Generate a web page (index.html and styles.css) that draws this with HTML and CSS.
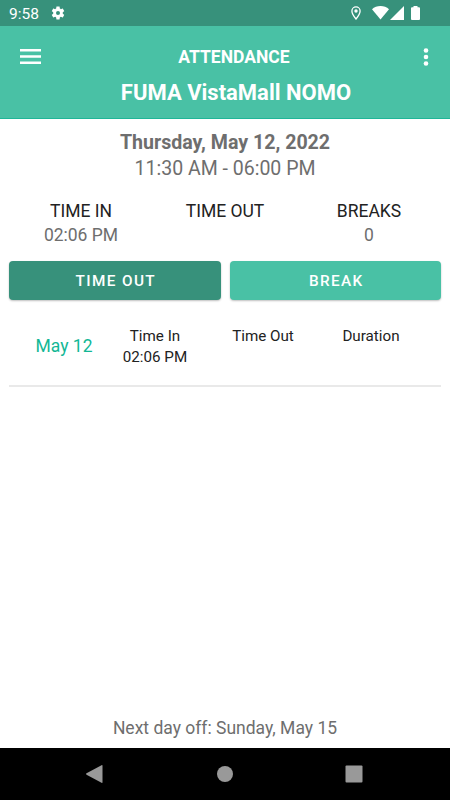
FILE: index.html
```html
<!DOCTYPE html>
<html lang="en">
<head>
    <meta charset="utf-8">
    <meta name="viewport" content="width=device-width, initial-scale=1.0">
    <title>Attendance</title>
    <link rel="stylesheet" href="styles.css">
</head>
<body>
    <div class="status-bar">
        <span class="clock">9:58</span>
        <svg class="gear" width="16" height="16" viewBox="0 0 24 24"><path fill="#fff" d="M19.14 12.94c.04-.3.06-.61.06-.94s-.02-.64-.07-.94l2.03-1.58c.18-.14.23-.41.12-.61l-1.92-3.32c-.12-.22-.37-.29-.59-.22l-2.39.96c-.5-.38-1.03-.7-1.62-.94l-.36-2.54c-.04-.24-.24-.41-.48-.41h-3.84c-.24 0-.43.17-.47.41l-.36 2.54c-.59.24-1.13.57-1.62.94l-2.39-.96c-.22-.08-.47 0-.59.22L2.74 8.87c-.12.21-.08.47.12.61l2.03 1.58c-.05.3-.09.63-.09.94s.02.64.07.94l-2.03 1.58c-.18.14-.23.41-.12.61l1.92 3.32c.12.22.37.29.59.22l2.39-.96c.5.38 1.03.7 1.62.94l.36 2.54c.05.24.24.41.48.41h3.84c.24 0 .44-.17.47-.41l.36-2.54c.59-.24 1.13-.56 1.62-.94l2.39.96c.22.08.47 0 .59-.22l1.92-3.32c.12-.22.07-.47-.12-.61l-2.01-1.58zM12 15a3 3 0 1 1 0-6 3 3 0 0 1 0 6z"/></svg>
        <div class="signals">
            <svg class="pin" width="10" height="14" viewBox="0 0 10 14"><path fill="none" stroke="#fff" stroke-width="1.3" d="M5 .9C2.7.9.9 2.700.9 5c0 3 4.100 8 4.100 8s4.100-5 4.100-8C9.100 2.700 7.300.9 5 .9z"/><circle cx="5" cy="5" r="1.700" fill="#fff"/></svg>
            <svg class="wifi" width="17" height="14" viewBox="0 0 17 14"><path fill="#fff" d="M0 3.200C2.300 1.200 5.200 0 8.500 0s6.200 1.200 8.500 3.200L8.500 13.500z"/></svg>
            <svg class="cell" width="14" height="14" viewBox="0 0 14 14"><path fill="#fff" d="M0 14L14 0v14z"/></svg>
            <svg class="battery" width="9" height="14" viewBox="0 0 9 14"><path fill="#fff" d="M2.500 0h4v1.300H8q1 0 1 1V13q0 1-1 1H1q-1 0-1-1V2.300q0-1 1-1h1.500z"/></svg>
        </div>
    </div>

    <header class="header">
        <div class="header-top">
            <svg class="menu" width="21" height="15" viewBox="0 0 21 15"><path fill="#fff" d="M0 0h21v2.500H0zM0 6.200h21v2.500H0zM0 12.400h21v2.500H0z"/></svg>
            <h1 class="title">ATTENDANCE</h1>
            <svg class="more" width="6" height="20" viewBox="0 0 6 20"><g fill="#fff"><circle cx="3" cy="3.500" r="2.300"/><circle cx="3" cy="10" r="2.300"/><circle cx="3" cy="16.500" r="2.300"/></g></svg>
        </div>
        <h2 class="branch">FUMA VistaMall NOMO</h2>
    </header>

    <main class="main">
        <div class="date">Thursday, May 12, 2022</div>
        <div class="shift">11:30 AM - 06:00 PM</div>

        <div class="summary">
            <div><div class="label">TIME IN</div><div class="value">02:06 PM</div></div>
            <div><div class="label">TIME OUT</div></div>
            <div><div class="label">BREAKS</div><div class="value">0</div></div>
        </div>

        <div class="actions">
            <button class="btn btn-dark">TIME OUT</button>
            <button class="btn">BREAK</button>
        </div>

        <div class="log">
            <div class="day">May 12</div>
            <div class="col">Time In<br>02:06 PM</div>
            <div class="col">Time Out</div>
            <div class="col">Duration</div>
        </div>
    </main>

    <div class="day-off">Next day off: Sunday, May 15</div>

    <nav class="nav-bar">
        <svg width="18" height="18" viewBox="0 0 18 18"><path fill="#999" d="M.5 8.300L15.500.2q1-.4 1 .6v16.400q0 1-1 .6L.5 9.700q-.8-.7 0-1.400z"/></svg>
        <svg width="18" height="18" viewBox="0 0 18 18"><circle cx="9" cy="9" r="8" fill="#999"/></svg>
        <svg width="18" height="18" viewBox="0 0 18 18"><rect x=".5" y=".5" width="17" height="17" rx="1" fill="#999"/></svg>
    </nav>
</body>
</html>
```

FILE: styles.css
```css
body {
    font-family: Roboto, sans-serif;
    margin: 0;
    height: 100vh;
    display: flex;
    flex-direction: column;
    background-color: #fff;
    color: #222;
}
svg {
    display: block;
    flex: none;
}
.status-bar {
    height: 26px;
    background-color: #37917b;
    color: #fff;
    display: flex;
    align-items: center;
    padding: 0 30px 0 9px;
}
.clock {
    width: 41px;
    font-size: 15.5px;
    line-height: 26px;
    padding-top: 2px;
}
.signals {
    margin-left: auto;
    display: flex;
    align-items: center;
}
.wifi {
    margin-left: 11px;
}
.cell {
    margin-left: 1px;
}
.battery {
    margin-left: 7px;
}
.header {
    box-sizing: border-box;
    height: 93px;
    background-color: #49c1a5;
    border-bottom: 1px solid #1fb698;
    color: #fff;
}
.header-top {
    display: flex;
    align-items: center;
    justify-content: space-between;
    height: 61px;
    padding: 0 21px 0 20px;
}
.title {
    margin: 0 0 0 4px;
    font-size: 17.5px;
    font-weight: 700;
}
.branch {
    margin: 0;
    padding-left: 22px;
    font-size: 22px;
    font-weight: 700;
    line-height: 11px;
    text-align: center;
}
.main {
    flex: 1;
    padding: 11px 9px 0;
}
.date {
    font-size: 19.6px;
    font-weight: 700;
    line-height: 26px;
    text-align: center;
    color: #6e6e6e;
}
.shift {
    font-size: 19.5px;
    line-height: 26px;
    text-align: center;
    color: #6e6e6e;
}
.summary {
    display: grid;
    grid-template-columns: repeat(3, 1fr);
    height: 79px;
    padding-top: 17px;
    box-sizing: border-box;
    text-align: center;
    font-size: 17.5px;
    line-height: 24px;
}
.value {
    color: #6e6e6e;
}
.actions {
    display: flex;
    gap: 9px;
}
.btn {
    flex: 1;
    height: 39px;
    padding: 1px 0 0 2px;
    border: none;
    border-radius: 4px;
    background-color: #49c1a5;
    box-shadow: 0 1px 2px rgba(0, 0, 0, 0.25);
    color: #fff;
    font-family: inherit;
    font-size: 15.3px;
    font-weight: 500;
    letter-spacing: 1.4px;
}
.btn-dark {
    background-color: #37917b;
}
.log {
    box-sizing: border-box;
    height: 87px;
    display: grid;
    grid-template-columns: 74px repeat(3, 108px);
    padding: 26px 0 0 18px;
    border-bottom: 2px solid #e9e9e9;
    text-align: center;
    font-size: 15.2px;
    line-height: 21px;
}
.day {
    color: #12b795;
    font-size: 17.5px;
    line-height: 40px;
}
.day-off {
    font-size: 17.5px;
    line-height: 40px;
    text-align: center;
    color: #6e6e6e;
}
.nav-bar {
    height: 52px;
    background-color: #000;
    display: flex;
    align-items: center;
    justify-content: space-between;
    padding: 0 87px 0 86px;
}
```
